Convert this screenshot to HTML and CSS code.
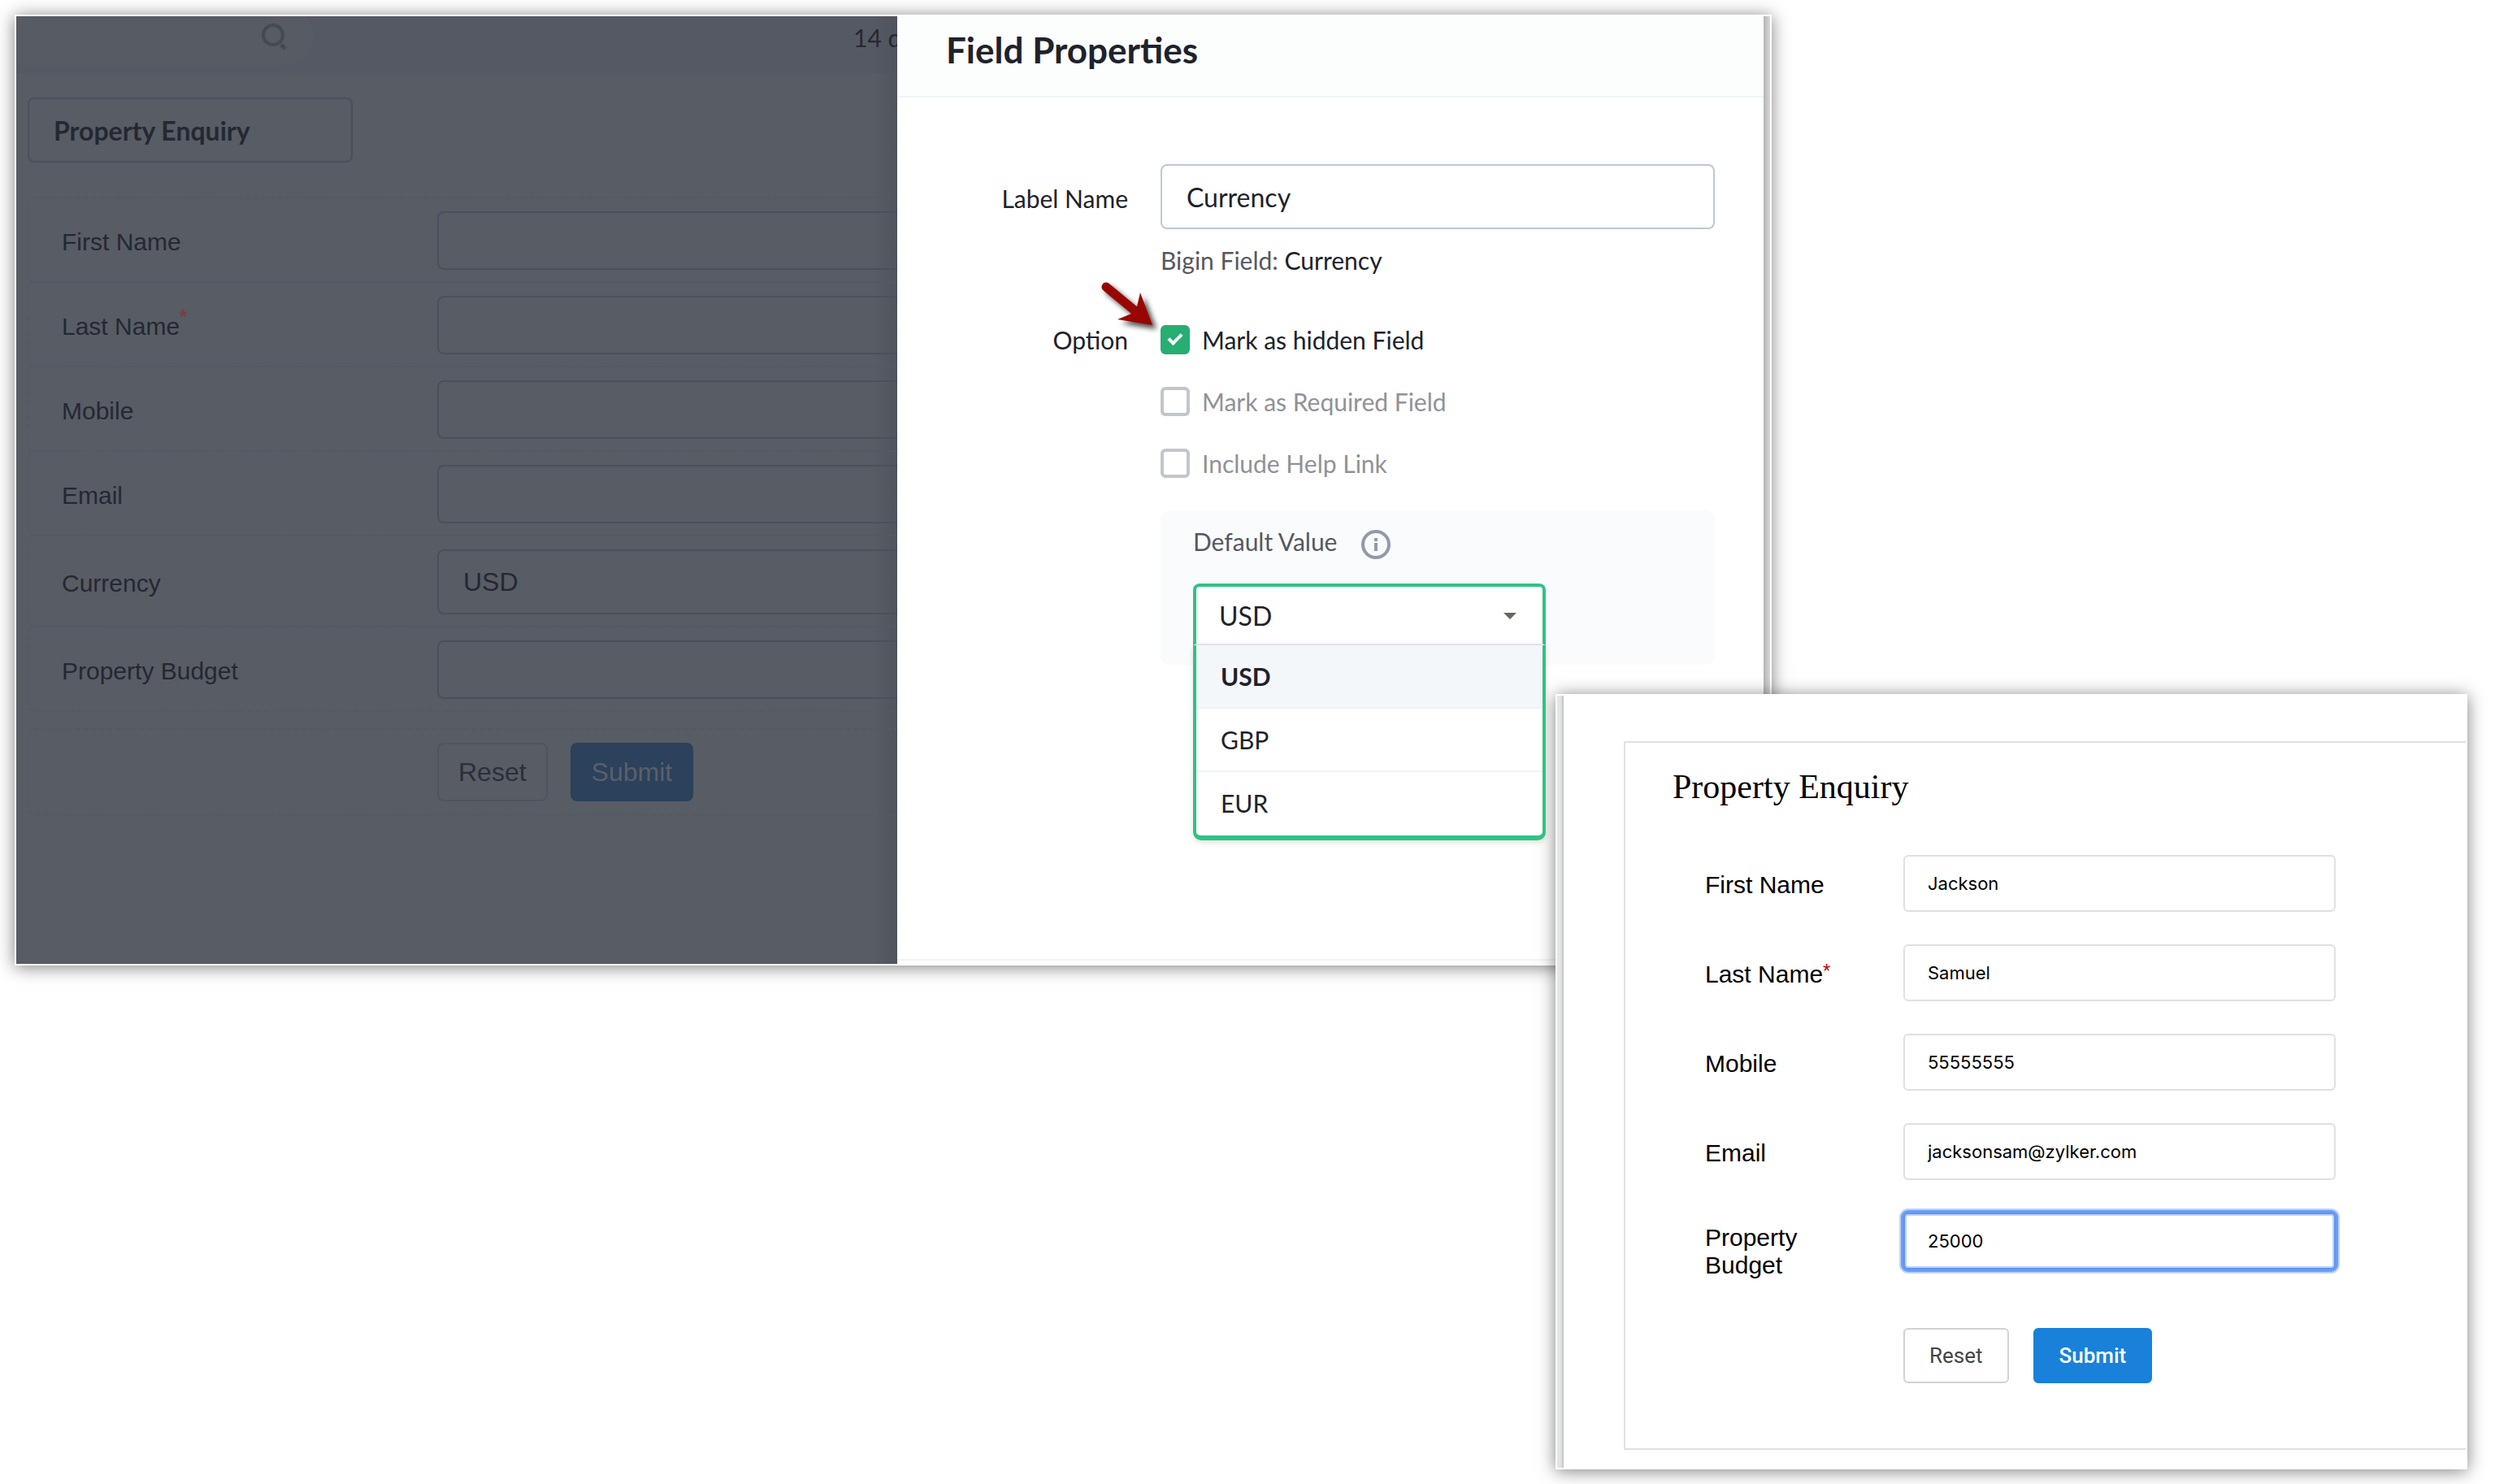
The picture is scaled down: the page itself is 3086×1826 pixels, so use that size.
FILE: index.html
```html
<!DOCTYPE html>
<html lang="en">
<head>
    <meta charset="UTF-8">
    <meta name="viewport" content="width=device-width, initial-scale=1.0">
    <title>Field Properties</title>
    <link rel="stylesheet" href="styles.css">
</head>
<body>
    <div class="stage">
        <div class="window editor-window">
            <!-- form builder, dimmed behind the drawer -->
            <div class="builder">
                <div class="topbar">
                    <div class="search">
                        <input type="search" aria-label="Search">
                        <svg class="search-icon" viewBox="0 0 32 34" aria-hidden="true">
                            <circle cx="14" cy="14" r="12" fill="none" stroke="#454953" stroke-width="4"/>
                            <path d="M24 26 L29 31" stroke="#454953" stroke-width="5"/>
                        </svg>
                    </div>
                    <span class="trial">14 days</span>
                </div>
                <form class="builder-form">
                    <input class="form-title" type="text" value="Property Enquiry" aria-label="Form title">
                    <div class="builder-row">
                        <label for="b-first">First Name</label>
                        <input type="text" id="b-first">
                    </div>
                    <div class="builder-row">
                        <label for="b-last">Last Name<span class="required">*</span></label>
                        <input type="text" id="b-last">
                    </div>
                    <div class="builder-row">
                        <label for="b-mobile">Mobile</label>
                        <input type="text" id="b-mobile">
                    </div>
                    <div class="builder-row">
                        <label for="b-email">Email</label>
                        <input type="text" id="b-email">
                    </div>
                    <div class="builder-row">
                        <label for="b-currency">Currency</label>
                        <select id="b-currency">
                            <option>USD</option>
                            <option>GBP</option>
                            <option>EUR</option>
                        </select>
                    </div>
                    <div class="builder-row">
                        <label for="b-budget">Property Budget</label>
                        <input type="text" id="b-budget">
                    </div>
                    <div class="builder-row builder-actions">
                        <button type="reset" class="dim-reset">Reset</button>
                        <button type="submit" class="dim-submit">Submit</button>
                    </div>
                </form>
            </div>

            <div class="drawer">
                <div class="drawer-header">
                    <h2>Field Properties</h2>
                </div>
                <form class="drawer-body">
                    <label class="side-label" for="labelName">Label Name</label>
                    <input type="text" id="labelName" class="label-input" value="Currency">
                    <p class="field-note">Bigin Field: <span>Currency</span></p>
                    <span class="side-label">Option</span>
                    <div class="options">
                        <svg class="pointer" viewBox="0 0 76 66" aria-hidden="true">
                            <path d="M7 7 L42 36" stroke="#990502" stroke-width="11" stroke-linecap="round"/>
                            <path d="M64 54 L21 47 L38 40 L45 31 L49 14 Z" fill="#990502"/>
                        </svg>
                        <label class="option"><input type="checkbox" checked> Mark as hidden Field</label>
                        <label class="option muted"><input type="checkbox"> Mark as Required Field</label>
                        <label class="option muted"><input type="checkbox"> Include Help Link</label>
                    </div>
                    <div class="default-box">
                        <div class="default-head">
                            <label for="defaultValue">Default Value</label>
                            <svg class="info" viewBox="0 0 36 36" aria-hidden="true">
                                <circle cx="18" cy="18" r="16" fill="none" stroke="#9299a8" stroke-width="4"/>
                                <path d="M16 10h4v4h-4z M16 16h4v10h-4z" fill="#9299a8"/>
                            </svg>
                        </div>
                        <div class="dropdown">
                            <select id="defaultValue">
                                <option>USD</option>
                                <option>GBP</option>
                                <option>EUR</option>
                            </select>
                            <ul class="dropdown-menu">
                                <li class="selected">USD</li>
                                <li>GBP</li>
                                <li>EUR</li>
                            </ul>
                        </div>
                    </div>
                </form>
                <div class="drawer-footer"></div>
            </div>
            <div class="edge"></div>
        </div>

        <div class="window preview-window">
            <div class="edge edge-left"></div>
            <div class="preview">
                <form class="preview-form">
                    <h1>Property Enquiry</h1>
                    <div class="preview-row">
                        <label for="firstName">First Name</label>
                        <input type="text" id="firstName" value="Jackson">
                    </div>
                    <div class="preview-row">
                        <label for="lastName">Last Name<span class="required">*</span></label>
                        <input type="text" id="lastName" value="Samuel">
                    </div>
                    <div class="preview-row">
                        <label for="mobile">Mobile</label>
                        <input type="text" id="mobile" value="55555555">
                    </div>
                    <div class="preview-row">
                        <label for="email">Email</label>
                        <input type="email" id="email" value="jacksonsam@zylker.com">
                    </div>
                    <div class="preview-row">
                        <label for="budget" class="two-lines">Property Budget</label>
                        <input type="text" id="budget" class="focused" value="25000">
                    </div>
                    <div class="preview-actions">
                        <button type="reset" class="reset-btn">Reset</button>
                        <button type="submit" class="submit-btn">Submit</button>
                    </div>
                </form>
            </div>
        </div>
    </div>
</body>
</html>
```
FILE: styles.css
```css
* {
    box-sizing: border-box;
}
body {
    margin: 0;
    background: #fff;
    color: #20222b;
    font-family: Lato, sans-serif;
    font-size: 30px;
}
h1, h2, p, ul {
    margin: 0;
    padding: 0;
}
input, select, button {
    margin: 0;
    font-family: inherit;
    font-size: inherit;
    color: inherit;
    appearance: none;
    outline: none;
}
button {
    cursor: pointer;
}

/* the preview overlaps the right end of the editor */
.stage {
    display: grid;
    grid-template-columns: 1896fr 266fr 856fr;
    align-items: start;
    padding: 18px 50px 18px 18px;
}
.window {
    display: flex;
    grid-row: 1;
    min-width: 0;
    background: #fff;
    border: 2px solid #fff;
    box-shadow: 0 2px 20px rgba(0, 0, 0, 0.5);
}
.editor-window {
    grid-column: 1 / 3;
}
.preview-window {
    grid-column: 2 / 4;
    margin-top: 836px;
}
.edge {
    flex: none;
    width: 8px;
    background: linear-gradient(to right, #b4b4b4, #d8d8d8);
}
.edge-left {
    background: linear-gradient(to right, #e4e5e7 50%, #bfc0c2);
}

/* dimmed form builder */
.builder {
    flex: 1084 1 0;
    min-width: 0;
    overflow: hidden;
    background: linear-gradient(to left, #50545d, #585c64 30px);
    font-family: "Liberation Sans", Arial, sans-serif;
    color: #242832;
}
.topbar {
    display: flex;
    justify-content: space-between;
    height: 70px;
    overflow: hidden;
    background: linear-gradient(to left, #4f535d, #555963 30px);
}
.search {
    position: relative;
    width: 366px;
    height: 70px;
    margin-top: -10px;
}
.search input {
    width: 100%;
    height: 100%;
    border: none;
    border-radius: 0 35px 35px 0;
    background: #575b63;
}
.search-icon {
    position: absolute;
    top: 19px;
    right: 32px;
    width: 32px;
    height: 34px;
}
.trial {
    width: 54px;
    padding-top: 8px;
    font-family: Lato, sans-serif;
    line-height: 36px;
    white-space: nowrap;
}
.builder-form {
    margin-right: -40px;
    padding: 30px 0 0 14px;
}
.form-title {
    display: block;
    width: 400px;
    height: 80px;
    margin-bottom: 42px;
    padding: 0 30px;
    border: 2px solid #4b4f5d;
    border-radius: 8px;
    background: none;
    font-family: Lato, sans-serif;
    font-size: 32px;
    font-weight: 700;
}
.builder-row {
    display: grid;
    grid-template-columns: 462px 1fr;
    align-items: center;
    margin-bottom: -2px;
    padding: 16px 0 14px 40px;
    border: 2px dashed #545965;
    border-radius: 8px;
}
.builder-row label {
    padding-top: 4px;
    line-height: 34px;
}
.builder-row input,
.builder-row select {
    width: 100%;
    height: 72px;
    padding: 0 30px;
    border: 2px solid #4b4f5d;
    border-radius: 8px;
    background: none;
    font-size: 32px;
}
.builder-row select {
    height: 80px;
}
.required {
    color: #c00000;
    font-size: 24px;
    line-height: 0;
    vertical-align: 6px;
}
.builder-row .required {
    color: #7b3d47;
    font-weight: 700;
    vertical-align: 14px;
}
.builder-actions {
    display: flex;
    gap: 28px;
    margin-top: 22px;
    padding: 16px 0 16px 502px;
}
.builder-actions button {
    height: 72px;
    padding: 0 24px;
    border: 2px solid #50545f;
    border-radius: 8px;
    background: none;
    color: #2b2f3a;
    font-size: 32px;
}
.builder-actions .dim-submit {
    border-color: #2b415c;
    background: #2b415c;
    color: #5b5f68;
}

/* field properties drawer */
.drawer {
    flex: 1066 1 0;
    display: flex;
    flex-direction: column;
    min-width: 0;
}
.drawer-header {
    padding: 14px 60px 30px;
    background: #fcfdfd;
    border-bottom: 2px solid #eff4f8;
}
h2 {
    font-size: 44px;
    font-weight: 700;
    line-height: 54px;
}
.drawer-body {
    display: grid;
    grid-template-columns: 284px 1fr;
    column-gap: 40px;
    padding: 82px 60px 362px 0;
}
.side-label {
    line-height: 36px;
    text-align: right;
}
label.side-label {
    align-self: center;
    padding-top: 4px;
}
.label-input {
    width: 100%;
    height: 80px;
    padding: 0 30px;
    border: 2px solid #bdc8d4;
    border-radius: 8px;
    font-size: 32px;
}
.field-note {
    grid-column: 2;
    margin: 18px 0 60px;
    color: #56585f;
    line-height: 40px;
}
.field-note span {
    color: #20222b;
}
.options {
    position: relative;
    display: flex;
    flex-direction: column;
    gap: 40px;
}
.pointer {
    position: absolute;
    top: -54px;
    left: -74px;
    width: 76px;
    height: 66px;
    overflow: visible;
    filter: drop-shadow(5px 5px 3px rgba(0, 0, 0, 0.7));
}
.option {
    display: flex;
    align-items: center;
    gap: 15px;
    line-height: 36px;
}
.muted {
    color: #909297;
}
.option input {
    position: relative;
    width: 36px;
    height: 36px;
    border: 4px solid #c1c6cc;
    border-radius: 6px;
    background: #fff;
}
.option input:checked {
    border-color: #27ae73;
    background: #27ae73;
}
.option input:checked::after {
    content: "";
    position: absolute;
    top: 3px;
    left: 9px;
    width: 6px;
    height: 13px;
    border: solid #fff;
    border-width: 0 4px 4px 0;
    transform: rotate(45deg);
}
.default-box {
    grid-column: 2;
    margin-top: 40px;
    padding: 20px 40px 24px;
    border-radius: 12px;
    background: #fafbfd;
}
.default-head {
    display: flex;
    align-items: flex-start;
    gap: 30px;
    height: 40px;
    margin-bottom: 30px;
    color: #56585f;
    line-height: 36px;
}
.info {
    width: 36px;
    height: 36px;
    margin-top: 4px;
}
.dropdown {
    position: relative;
    width: 434px;
}
.dropdown select {
    display: block;
    width: 100%;
    height: 76px;
    padding: 0 28px;
    border: 4px solid #30c285;
    border-bottom: 2px solid #e3e7ed;
    border-radius: 8px 8px 0 0;
    background: #fff;
    font-size: 32px;
}
.dropdown::after {
    content: "";
    position: absolute;
    top: 36px;
    right: 36px;
    border: 8px solid transparent;
    border-top-color: #6a6562;
    border-bottom: none;
}
.dropdown-menu {
    position: absolute;
    top: 76px;
    left: 0;
    width: 100%;
    border: 4px solid #30c285;
    border-width: 0 4px 6px;
    border-radius: 0 0 10px 10px;
    background: #fff;
    box-shadow: 0 3px 6px rgba(80, 60, 20, 0.15);
    list-style: none;
}
.dropdown-menu li {
    height: 78px;
    padding: 0 30px;
    border-bottom: 2px solid #eff4f8;
    line-height: 76px;
}
.dropdown-menu li:last-child {
    border-bottom: none;
}
.dropdown-menu .selected {
    background: #f3f7fa;
    font-weight: 700;
}
.drawer-footer {
    height: 6px;
    border-top: 2px solid #eff4f8;
    background: #fcfdfd;
}

/* published form */
.preview {
    flex: 1;
    min-width: 0;
    padding: 56px 0 22px 74px;
    color: #000;
    font-family: "Liberation Sans", Arial, sans-serif;
}
.preview-form {
    padding: 30px 160px 80px 98px;
    border: 2px solid #e0e0e0;
    border-right: none;
}
h1 {
    margin: 0 0 60px -40px;
    font-family: "Liberation Serif", "Times New Roman", serif;
    font-size: 42px;
    font-weight: 400;
    line-height: 48px;
}
.preview-row {
    display: grid;
    grid-template-columns: 164px 1fr;
    column-gap: 80px;
    align-items: start;
    margin-bottom: 40px;
}
.preview-row label {
    padding-top: 20px;
    line-height: 34px;
}
.preview-row .two-lines {
    padding-top: 14px;
}
.preview-row input {
    width: 100%;
    height: 70px;
    padding: 0 28px;
    border: 2px solid #e0e0e0;
    border-radius: 6px;
    background: #fff;
    font-family: Inter, sans-serif;
    font-size: 22px;
}
.preview-row .focused {
    border-color: #6094f0;
    box-shadow: 0 0 0 3px #6a9df7, 0 0 0 5px #bdd4fb, inset 0 0 0 2px #bdd4fb;
}
.preview-actions {
    display: flex;
    gap: 30px;
    margin-top: 60px;
    padding-left: 244px;
}
.preview-actions button {
    height: 68px;
    padding: 0 30px;
    border: 2px solid #d2d2d2;
    border-radius: 6px;
    background: #fff;
    color: #444;
    font-family: Roboto, sans-serif;
    font-size: 26px;
}
.preview-actions .submit-btn {
    border-color: #1981d9;
    background: #1981d9;
    color: #fff;
    font-weight: 500;
}
```
